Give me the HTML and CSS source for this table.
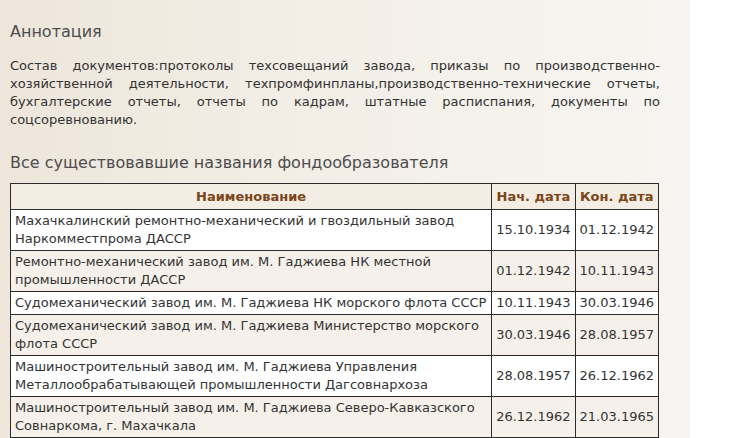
FILE: index.html
```html
<!DOCTYPE html>
<html lang="ru">
<head>
<meta charset="utf-8">
<title>Аннотация</title>
<link rel="stylesheet" href="styles.css">
</head>
<body>
<div class="page">
  <h2 class="title">Аннотация</h2>
  <p class="annotation">Состав документов:протоколы техсовещаний завода, приказы по производственно-хозяйственной деятельности, техпромфинпланы,производственно-технические отчеты, бухгалтерские отчеты, отчеты по кадрам, штатные расписпания, документы по соцсоревнованию.</p>
  <h2 class="title title-names">Все существовавшие названия фондообразователя</h2>
  <table class="names">
    <thead>
      <tr><th>Наименование</th><th class="date">Нач. дата</th><th class="date">Кон. дата</th></tr>
    </thead>
    <tbody>
      <tr><td>Махачкалинский ремонтно-механический и гвоздильный завод Наркомместпрома ДАССР</td><td class="date">15.10.1934</td><td class="date">01.12.1942</td></tr>
      <tr><td>Ремонтно-механический завод им. М. Гаджиева НК местной промышленности ДАССР</td><td class="date">01.12.1942</td><td class="date">10.11.1943</td></tr>
      <tr><td>Судомеханический завод им. М. Гаджиева НК морского флота СССР</td><td class="date">10.11.1943</td><td class="date">30.03.1946</td></tr>
      <tr><td>Судомеханический завод им. М. Гаджиева Министерство морского флота СССР</td><td class="date">30.03.1946</td><td class="date">28.08.1957</td></tr>
      <tr><td>Машиностроительный завод им. М. Гаджиева Управления Металлообрабатывающей промышленности Дагсовнархоза</td><td class="date">28.08.1957</td><td class="date">26.12.1962</td></tr>
      <tr><td>Машиностроительный завод им. М. Гаджиева Северо-Кавказского Совнаркома, г. Махачкала</td><td class="date">26.12.1962</td><td class="date">21.03.1965</td></tr>
    </tbody>
  </table>
</div>
</body>
</html>
```
FILE: styles.css
```css
html, body {
  margin: 0;
  padding: 0;
  background: #ffffff;
}
body {
  font-family: "DejaVu Sans", Verdana, sans-serif;
  font-size: 13px;
  line-height: 18px;
  color: #333333;
}
.page {
  width: 650px;
  padding: 22px 30px 40px 10px;
  min-height: 460px;
  background: linear-gradient(90deg, #eee6db 0%, #f2ede5 40%, #f6f3ee 80%, #f7f5f1 100%);
}
.title {
  margin: 0;
  font-size: 16px;
  font-weight: normal;
  line-height: 20px;
  color: #4d4d4d;
}
.annotation {
  margin: 15px 0 0 0;
  text-align: justify;
}
.title-names {
  margin-top: 24px;
}
.names {
  margin-top: 10px;
  width: 649px;
  border-collapse: collapse;
  background: #ffffff;
}
.names th, .names td {
  border: 1px solid #2b2b2b;
}
.names th {
  padding: 4px 4px 3px 4px;
  font-weight: bold;
  color: #7b4519;
  background: #f3ede3;
  text-align: center;
}
.names td {
  padding: 2px 4px;
  text-align: left;
  vertical-align: middle;
}
.names .date {
  white-space: nowrap;
  width: 1%;
}
.names tbody tr:nth-child(even) td {
  background: #f5f1ea;
}
```
